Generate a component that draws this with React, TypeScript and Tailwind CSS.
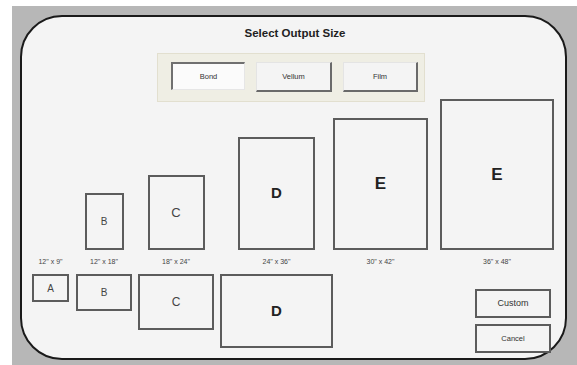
import React from 'react';

// 용지 크기 선택 대화상자

type Col = {
  w: string;
  ml: string;
  label: string;
  portrait?: { cls: string; letter: string; text: string };
  landscape?: { cls: string; letter: string; text: string };
  actions?: boolean;
};

const cols: Col[] = [
  {
    w: 'w-[37px]',
    ml: 'ml-[10px]',
    label: '12" x 9"',
    landscape: { cls: 'w-[37px] h-[28px]', letter: 'A', text: 'text-[10px] text-[#444]' },
  },
  {
    w: 'w-[56px]',
    ml: 'ml-[7px]',
    label: '12" x 18"',
    portrait: { cls: 'w-[39px] h-[57px]', letter: 'B', text: 'text-[10px] text-[#444]' },
    landscape: { cls: 'w-[56px] h-[37px]', letter: 'B', text: 'text-[10px] text-[#444]' },
  },
  {
    w: 'w-[76px]',
    ml: 'ml-[6px]',
    label: '18" x 24"',
    portrait: { cls: 'w-[57px] h-[75px]', letter: 'C', text: 'text-[13px] text-[#444]' },
    landscape: { cls: 'w-[76px] h-[56px]', letter: 'C', text: 'text-[12px] text-[#444]' },
  },
  {
    w: 'w-[113px]',
    ml: 'ml-[6px]',
    label: '24" x 36"',
    portrait: { cls: 'w-[77px] h-[113px]', letter: 'D', text: 'text-[15px] font-bold text-[#222]' },
    landscape: { cls: 'w-[113px] h-[74px]', letter: 'D', text: 'text-[15px] font-bold text-[#222]' },
  },
  {
    w: 'w-[95px]',
    ml: 'ml-0',
    label: '30" x 42"',
    portrait: { cls: 'w-[95px] h-[132px]', letter: 'E', text: 'text-[17px] font-bold text-[#222]' },
  },
  {
    w: 'w-[114px]',
    ml: 'ml-[12px]',
    label: '36" x 48"',
    portrait: { cls: 'w-[114px] h-[151px]', letter: 'E', text: 'text-[17px] font-bold text-[#222]' },
    actions: true,
  },
];

const Sheet = ({ cls, letter, text }: { cls: string; letter: string; text: string }) => (
  <div className={`${cls} border-2 border-[#5c5c5c] bg-[#f4f4f4] flex items-center justify-center`}>
    <span className={text}>{letter}</span>
  </div>
);

export default function App() {
  return (
    <div
      className="w-[577px] h-[365px] bg-white overflow-hidden"
      style={{ fontFamily: '"Liberation Sans", Arial, sans-serif' }}
    >
      <div className="ml-[12px] mt-[6px] w-[565px] h-[359px] bg-[#b7b7b7] pl-[8px] pt-[9px]">
        <div className="w-[547px] h-[345px] border-2 border-[#1a1a1a] rounded-[42px] bg-[#f4f4f4] flex flex-col">
          {/* 제목 + 용지 종류 */}
          <div className="h-[82px] shrink-0">
            <div className="pt-[9px] h-[23px] text-center text-[11.5px] leading-[14px] font-bold text-[#222] pl-[3px]">
              Select Output Size
            </div>
            <div className="mt-[13px] ml-[135px] w-[268px] h-[49px] bg-[#efeee4] border border-[#e2dfcf] flex items-start pt-[8px] pl-[13px] gap-[11px]">
              <div className="w-[74px] h-[28px] bg-[#fbfbfb] border-t-2 border-l-2 border-r border-b border-t-[#707070] border-l-[#707070] border-r-[#e6e6e6] border-b-[#e6e6e6] flex items-center justify-center text-[7.5px] text-[#333]">
                Bond
              </div>
              <div className="w-[76px] h-[30px] bg-[#f4f4f4] border-r-2 border-b-2 border-t border-l border-r-[#6a6a6a] border-b-[#6a6a6a] border-t-[#e4e4e4] border-l-[#e4e4e4] flex items-center justify-center text-[7.5px] text-[#333]">
                Vellum
              </div>
              <div className="w-[75px] h-[30px] bg-[#f4f4f4] border-r-2 border-b-2 border-t border-l border-r-[#6a6a6a] border-b-[#6a6a6a] border-t-[#e4e4e4] border-l-[#e4e4e4] flex items-center justify-center text-[7.5px] text-[#333]">
                Film
              </div>
            </div>
          </div>

          {/* 용지 크기 */}
          <div className="flex">
            {cols.map((c, i) => (
              <div key={i} className={`${c.w} ${c.ml} shrink-0 flex flex-col items-center`}>
                <div className="h-[151px] flex items-end">
                  {c.portrait && <Sheet {...c.portrait} />}
                </div>
                <div className="h-[24px] flex items-center whitespace-nowrap text-[7px] text-[#444]">
                  {c.label}
                </div>
                {c.landscape && <Sheet {...c.landscape} />}
                {c.actions && (
                  <div className="self-end mr-[3px] mt-[15px] flex flex-col gap-[6px]">
                    <div className="w-[76px] h-[29px] border-2 border-[#5c5c5c] bg-[#f4f4f4] flex items-center justify-center text-[9px] text-[#333]">
                      Custom
                    </div>
                    <div className="w-[76px] h-[29px] border-2 border-[#5c5c5c] bg-[#f4f4f4] flex items-center justify-center text-[7.5px] text-[#333]">
                      Cancel
                    </div>
                  </div>
                )}
              </div>
            ))}
          </div>
        </div>
      </div>
    </div>
  );
}
